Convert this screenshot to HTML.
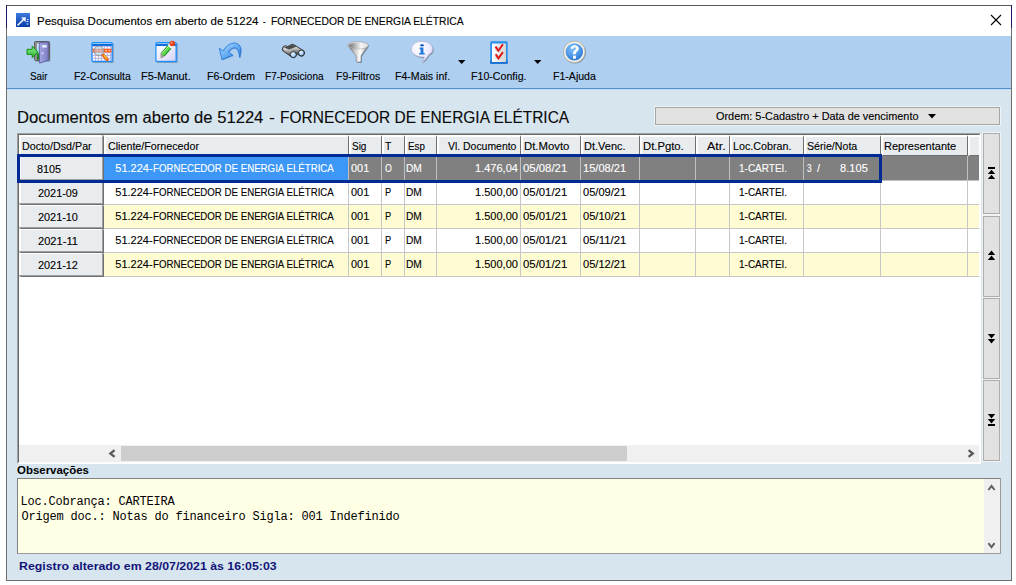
<!DOCTYPE html>
<html><head><meta charset="utf-8">
<style>
*{box-sizing:border-box;margin:0;padding:0}
html,body{width:1016px;height:585px;overflow:hidden;background:#fff;font-family:"Liberation Sans",sans-serif;color:#000}
.a{position:absolute}
.t{position:absolute;white-space:pre;line-height:1;-webkit-text-stroke:0.12px currentColor}
</style></head><body>
<div class="a" style="left:6px;top:5px;width:1006px;height:576px;border:1px solid #6e6e6e;border-top-color:#585858;background:#d6e5ee"></div>
<div class="a" style="left:6px;top:5px;width:1px;height:23px;background:#1e1a6a"></div>
<div class="a" style="left:1011px;top:5px;width:1px;height:23px;background:#1e1a6a"></div>
<div class="a" style="left:7px;top:6px;width:1004px;height:30px;background:#fff"></div>
<svg class="a" style="left:16px;top:13px" width="14" height="14" viewBox="0 0 14 14">
<defs><linearGradient id="ig" x1="0" y1="0" x2="0" y2="1"><stop offset="0" stop-color="#3d7be0"/><stop offset="1" stop-color="#0b3aa6"/></linearGradient></defs>
<rect width="14" height="14" fill="url(#ig)"/>
<path d="M1.5 12.5 L8 6" stroke="#fff" stroke-width="1.5"/><path d="M5 4.5 L9.8 4.2 L9.5 9 Z" fill="#fff"/>
<path d="M10.5 8.5 h2 M10.5 11 h2 M11 6.5 h1.5" stroke="#cfe0ff" stroke-width="1"/>
</svg>
<svg class="a" style="left:990px;top:14px" width="12" height="12"><path d="M1 1 L11 11 M11 1 L1 11" stroke="#000" stroke-width="1.1"/></svg>
<div class="a" style="left:7px;top:36px;width:1004px;height:52px;background:#aecff0"></div>
<div class="a" style="left:7px;top:88px;width:1004px;height:1px;background:#4f8fcf"></div>
<div class="a" style="left:7px;top:89px;width:1004px;height:1px;background:#c6def2"></div>
<svg class="a" style="left:458px;top:60px" width="8" height="5"><path d="M0 0 H7.4 L3.7 4 Z" fill="#000"/></svg>
<svg class="a" style="left:534px;top:60px" width="8" height="5"><path d="M0 0 H7.4 L3.7 4 Z" fill="#000"/></svg>
<svg class="a" style="left:22px;top:38px" width="32" height="28" viewBox="0 0 32 28">
<defs>
<linearGradient id="dg" x1="0" y1="0" x2="1" y2="0"><stop offset="0" stop-color="#a6a8e4"/><stop offset="1" stop-color="#7a7cc0"/></linearGradient>
<linearGradient id="og" x1="0" y1="0" x2="0" y2="1"><stop offset="0" stop-color="#d8f0ff"/><stop offset="0.55" stop-color="#9fd4f0"/><stop offset="0.62" stop-color="#2a9a2a"/><stop offset="1" stop-color="#1a7a1a"/></linearGradient>
<linearGradient id="ag" x1="0" y1="0" x2="0" y2="1"><stop offset="0" stop-color="#8ef08e"/><stop offset="1" stop-color="#2cb42c"/></linearGradient>
</defs>
<rect x="13.5" y="4.5" width="15" height="19.5" rx="1" fill="#5a6a80" opacity="0.35"/>
<rect x="12.5" y="3.5" width="15" height="19" rx="1" fill="#8e8e8e" stroke="#5e5e5e" stroke-width="1"/>
<rect x="15" y="5.5" width="4" height="16" fill="url(#og)"/>
<path d="M17.2 4.8 L26.6 3.8 L26.2 22.4 L17.6 25.2 Z" fill="url(#dg)" stroke="#55589a" stroke-width="0.8"/>
<rect x="20.2" y="7" width="4.6" height="2.6" fill="#e8eaff"/>
<circle cx="20.6" cy="15.3" r="1" fill="#d8dcff"/>
<path d="M5 11.3 H10.2 V8 L15.8 13.9 L10.2 19.8 V16.4 H5 Z" fill="url(#ag)" stroke="#159015" stroke-width="1"/>
</svg>
<svg class="a" style="left:86px;top:38px" width="32" height="28" viewBox="0 0 32 28">
<defs>
<pattern id="gp" width="3" height="3" patternUnits="userSpaceOnUse" x="6" y="8"><rect width="3" height="3" fill="#b4b0e4"/><rect x="0.8" y="0.8" width="2" height="2" fill="#fff"/></pattern>
</defs>
<rect x="6.3" y="5" width="21.5" height="20" rx="1.5" fill="#40607a" opacity="0.45"/>
<rect x="5.3" y="4" width="21.5" height="20" rx="1.5" fill="#1a90ff"/>
<rect x="6.5" y="5" width="19" height="2.6" fill="#0b66d8"/>
<rect x="6.5" y="5" width="19" height="0.9" fill="#a8d4ff"/>
<rect x="6.5" y="8" width="19" height="14.8" fill="url(#gp)"/>
<rect x="6.5" y="10.8" width="19" height="3.6" fill="#ff5a1a"/>
<path d="M7.5 12 h1.6 v1.3 h-1.6z M10.5 12 h1.6 v1.3 h-1.6z M13.5 12 h1.6 v1.3 h-1.6z M16.5 12 h1.6 v1.3 h-1.6z M19.5 12 h1.6 v1.3 h-1.6z M22.5 12 h1.6 v1.3 h-1.6z" fill="#ffc8a0"/>
<circle cx="12.9" cy="12.9" r="4.8" fill="#b0e0ff" fill-opacity="0.5" stroke="#9a9a9a" stroke-width="1"/>
<path d="M17.2 17.3 L21.3 21.6" stroke="#e85a10" stroke-width="3" stroke-linecap="round"/>
<path d="M17.6 17.2 L21.2 21" stroke="#ffd020" stroke-width="1.2"/>
</svg>
<svg class="a" style="left:150px;top:38px" width="32" height="28" viewBox="0 0 32 28">
<defs><linearGradient id="wg" x1="0" y1="0" x2="1" y2="1"><stop offset="0" stop-color="#fff"/><stop offset="1" stop-color="#d6d2f6"/></linearGradient>
<linearGradient id="pg" x1="0" y1="0" x2="1" y2="0"><stop offset="0" stop-color="#9cf07a"/><stop offset="1" stop-color="#1e9a1e"/></linearGradient></defs>
<rect x="6.3" y="5" width="21.5" height="20" rx="1.5" fill="#40607a" opacity="0.45"/>
<rect x="5.3" y="4" width="21.5" height="20" rx="1.5" fill="#1a90ff"/>
<rect x="6.5" y="5.2" width="19" height="2.6" fill="#0b66d8"/>
<rect x="6.5" y="5.2" width="19" height="0.9" fill="#a8d4ff"/>
<rect x="6.5" y="8" width="19" height="14.8" fill="url(#wg)"/>
<path d="M10.8 15.6 L13.9 18.5 L11 20.2 Z" fill="#b8a890" stroke="#7a7a7a" stroke-width="0.5"/>
<path d="M12.6 16.8 L19.6 8.8" stroke="#1e8a1e" stroke-width="5" stroke-linecap="butt"/>
<path d="M12.6 16.8 L19.6 8.8" stroke="#5cd84a" stroke-width="3.2"/>
<path d="M11.8 15.8 L18.8 8" stroke="#b0f890" stroke-width="1"/>
<path d="M19.4 9 L21 7.2" stroke="#f4f4f4" stroke-width="5"/>
<circle cx="22.3" cy="5.5" r="2.8" fill="#e8401a"/>
<circle cx="21.6" cy="4.8" r="1" fill="#ff9a70"/>
</svg>
<svg class="a" style="left:214px;top:38px" width="32" height="28" viewBox="0 0 32 28">
<defs><linearGradient id="rg" x1="0" y1="0" x2="1" y2="1"><stop offset="0" stop-color="#b4dcff"/><stop offset="0.6" stop-color="#5aa6f0"/><stop offset="1" stop-color="#2a7ee0"/></linearGradient></defs>
<path d="M5.3 10.3 L9.5 13 C11 9, 15 5.5, 20 5 C24 4.8, 27.5 8, 26.8 13 C26.5 16, 26 18, 25.8 19.6 C25.3 16, 24.5 12, 22.5 10.5 C20.5 9, 17 10, 14.5 14 L18.9 17.2 L7.9 21.5 Z" fill="#1a4a90" opacity="0.35" transform="translate(0.7,0.9)"/>
<path d="M5.3 10.3 L9.5 13 C11 9, 15 5.5, 20 5 C24 4.8, 27.5 8, 26.8 13 C26.5 16, 26 18, 25.8 19.6 C25.3 16, 24.5 12, 22.5 10.5 C20.5 9, 17 10, 14.5 14 L18.9 17.2 L7.9 21.5 Z" fill="url(#rg)" stroke="#1a6ed8" stroke-width="0.8" stroke-linejoin="round"/>
</svg>
<svg class="a" style="left:278px;top:38px" width="32" height="28" viewBox="0 0 32 28">
<defs><linearGradient id="bg2" x1="0" y1="0" x2="0" y2="1"><stop offset="0" stop-color="#d8d8d8"/><stop offset="1" stop-color="#6a6a6a"/></linearGradient>
<radialGradient id="lg" cx="0.4" cy="0.35" r="0.7"><stop offset="0" stop-color="#eef8ff"/><stop offset="1" stop-color="#78b0ee"/></radialGradient></defs>
<path d="M7.5 11 L15.3 16.5" stroke="#3a3a3a" stroke-width="7" stroke-linecap="round"/>
<path d="M14.5 9.5 L23.4 15" stroke="#3a3a3a" stroke-width="7" stroke-linecap="round"/>
<path d="M7.8 11 L15 16" stroke="url(#bg2)" stroke-width="5.2" stroke-linecap="round"/>
<path d="M14.8 9.6 L23 14.6" stroke="url(#bg2)" stroke-width="5.2" stroke-linecap="round"/>
<path d="M6 9.5 L12 7 L17 7.3 L19 8.6 L11 11.5 Z" fill="#4a4a4a"/>
<circle cx="15.3" cy="16.6" r="3" fill="url(#lg)" stroke="#2a2a2a" stroke-width="0.9"/>
<circle cx="23.4" cy="15" r="2.9" fill="url(#lg)" stroke="#2a2a2a" stroke-width="0.9"/>
</svg>
<svg class="a" style="left:342px;top:38px" width="32" height="28" viewBox="0 0 32 28">
<defs><linearGradient id="fg" x1="0" y1="0" x2="1" y2="0"><stop offset="0" stop-color="#7c7c7c"/><stop offset="0.6" stop-color="#ffffff"/><stop offset="1" stop-color="#9c9c9c"/></linearGradient>
<linearGradient id="fg2" x1="0" y1="0" x2="1" y2="0"><stop offset="0" stop-color="#6e6e6e"/><stop offset="0.65" stop-color="#f4f4f4"/><stop offset="1" stop-color="#dcdcdc"/></linearGradient></defs>
<path d="M5.6 7.3 L14.2 18 V23.5 Q16.5 24.8 19 23.5 V17.8 L26.4 7.3 Z" fill="#3a4048" opacity="0.45" transform="translate(0.9,0.9)"/>
<path d="M5.6 7.3 L14.2 18 V23.5 Q16.5 24.8 19 23.5 V17.8 L26.4 7.3 Z" fill="url(#fg)" stroke="#6a6a6a" stroke-width="0.5"/>
<ellipse cx="16" cy="7.3" rx="10.4" ry="3.6" fill="#e6e6e6" stroke="#8a8a8a" stroke-width="0.5"/>
<ellipse cx="16" cy="7.6" rx="9.4" ry="2.9" fill="url(#fg2)"/>
</svg>
<svg class="a" style="left:406px;top:38px" width="32" height="28" viewBox="0 0 32 28">
<defs><radialGradient id="sg" cx="0.35" cy="0.3" r="0.85"><stop offset="0" stop-color="#ffffff"/><stop offset="0.6" stop-color="#eceaff"/><stop offset="1" stop-color="#bcb8e8"/></radialGradient></defs>
<path d="M16 3.3 C22.2 3.3 26.8 6.6 26.8 11.2 C26.8 13.6 25.2 15.4 22.8 16.6 C21.5 19.5 19 22.5 15.8 24.4 C17.2 22.4 18 20.8 18.2 19 C10.5 19.2 5.3 15.8 5.3 11.2 C5.3 6.6 9.8 3.3 16 3.3 Z" fill="#555" opacity="0.5" transform="translate(0.9,1)"/>
<path d="M16 3.3 C22.2 3.3 26.8 6.6 26.8 11.2 C26.8 13.6 25.2 15.4 22.8 16.6 C21.5 19.5 19 22.5 15.8 24.4 C17.2 22.4 18 20.8 18.2 19 C10.5 19.2 5.3 15.8 5.3 11.2 C5.3 6.6 9.8 3.3 16 3.3 Z" fill="url(#sg)" stroke="#a8a6c8" stroke-width="0.6"/>
<ellipse cx="16" cy="7.3" rx="2" ry="1.1" fill="#0a50b8"/>
<path d="M13.6 9.6 H17.4 V14.9 H18.7 V16.6 H13.2 V14.9 H14.6 V11.2 H13.6 Z" fill="#1a78e0"/>
</svg>
<svg class="a" style="left:484px;top:38px" width="32" height="28" viewBox="0 0 32 28">
<defs><linearGradient id="cg" x1="0" y1="0" x2="1" y2="0"><stop offset="0" stop-color="#ffffff"/><stop offset="1" stop-color="#d4d4d4"/></linearGradient></defs>
<rect x="6.2" y="3.2" width="17.5" height="22.6" rx="1.5" fill="#2a90e8"/>
<rect x="6.2" y="22.5" width="17.5" height="3.3" fill="#1a70d0"/>
<rect x="8" y="5.5" width="14" height="18.5" fill="url(#cg)"/>
<ellipse cx="14.4" cy="11.4" rx="2.8" ry="2" fill="none" stroke="#c8c8c8" stroke-width="0.8"/>
<ellipse cx="14.4" cy="19.2" rx="2.8" ry="2" fill="none" stroke="#c8c8c8" stroke-width="0.8"/>
<path d="M11.5 8.6 L14.4 12.7 L18.9 6.2" stroke="#e01010" stroke-width="1.9" fill="none"/>
<path d="M11.7 16.3 L14.4 20.3 L18.9 14.1" stroke="#e01010" stroke-width="1.9" fill="none"/>
</svg>
<svg class="a" style="left:558px;top:38px" width="32" height="28" viewBox="0 0 32 28">
<defs><radialGradient id="qg" cx="0.4" cy="0.3" r="0.75"><stop offset="0" stop-color="#80c4ff"/><stop offset="1" stop-color="#2a78d6"/></radialGradient></defs>
<circle cx="17" cy="14.6" r="10.9" fill="#404850" opacity="0.45"/>
<circle cx="16.3" cy="13.9" r="10.8" fill="#f4f1e6" stroke="#a8a294" stroke-width="0.7"/>
<circle cx="16.3" cy="13.9" r="8.7" fill="url(#qg)"/>
<g transform="translate(16.8 14) scale(1.22) translate(-16.5 -13.8)" fill="#fff">
<path d="M13.2 11.2 C13.2 8.8 15 8.2 16.4 8.2 C18.2 8.2 19.8 9.2 19.8 11 C19.8 13.2 17.3 13.4 17.3 15.6 H15 C15 12.4 17.4 12.4 17.4 11 C17.4 10.2 16.8 9.9 16.3 9.9 C15.6 9.9 15.4 10.5 15.4 11.2 Z"/>
<rect x="15" y="16.8" width="2.4" height="2.5"/>
</g>
</svg>

<div class="a" style="left:654px;top:106px;width:347px;height:20px;background:#eef3f6"></div>
<div class="a" style="left:655px;top:107px;width:345px;height:18px;background:#e1e1e1;border:1px solid #a7a7a7"></div>
<svg class="a" style="left:927.5px;top:113.8px" width="8" height="5"><path d="M0 0 H8 L4 4.4 Z" fill="#000"/></svg>
<div class="a" style="left:17px;top:133px;width:964px;height:331px;background:#fff;border-left:1px solid #a0a0a0;border-top:1px solid #a0a0a0;border-right:1px solid #fff;border-bottom:1px solid #fff"></div>
<div class="a" style="left:18px;top:134px;width:962px;height:329px;border-left:1px solid #696969;border-top:1px solid #696969;border-right:1px solid #fcfcfc;border-bottom:1px solid #fcfcfc"></div>
<div class="a" style="left:19px;top:135px;width:85px;height:21px;background:#e9ecef;border-left:2px solid #fff;border-top:2px solid #fff;border-right:1px solid #6f6f6f;border-bottom:1px solid #6f6f6f"></div>
<div class="a" style="left:104px;top:135px;width:245px;height:21px;background:#e9ecef;border-left:2px solid #fff;border-top:2px solid #fff;border-right:1px solid #6f6f6f;border-bottom:1px solid #6f6f6f"></div>
<div class="a" style="left:349px;top:135px;width:33px;height:21px;background:#e9ecef;border-left:2px solid #fff;border-top:2px solid #fff;border-right:1px solid #6f6f6f;border-bottom:1px solid #6f6f6f"></div>
<div class="a" style="left:382px;top:135px;width:23px;height:21px;background:#e9ecef;border-left:2px solid #fff;border-top:2px solid #fff;border-right:1px solid #6f6f6f;border-bottom:1px solid #6f6f6f"></div>
<div class="a" style="left:405px;top:135px;width:32px;height:21px;background:#e9ecef;border-left:2px solid #fff;border-top:2px solid #fff;border-right:1px solid #6f6f6f;border-bottom:1px solid #6f6f6f"></div>
<div class="a" style="left:437px;top:135px;width:84px;height:21px;background:#e9ecef;border-left:2px solid #fff;border-top:2px solid #fff;border-right:1px solid #6f6f6f;border-bottom:1px solid #6f6f6f"></div>
<div class="a" style="left:521px;top:135px;width:60px;height:21px;background:#e9ecef;border-left:2px solid #fff;border-top:2px solid #fff;border-right:1px solid #6f6f6f;border-bottom:1px solid #6f6f6f"></div>
<div class="a" style="left:581px;top:135px;width:59px;height:21px;background:#e9ecef;border-left:2px solid #fff;border-top:2px solid #fff;border-right:1px solid #6f6f6f;border-bottom:1px solid #6f6f6f"></div>
<div class="a" style="left:640px;top:135px;width:56px;height:21px;background:#e9ecef;border-left:2px solid #fff;border-top:2px solid #fff;border-right:1px solid #6f6f6f;border-bottom:1px solid #6f6f6f"></div>
<div class="a" style="left:696px;top:135px;width:34px;height:21px;background:#e9ecef;border-left:2px solid #fff;border-top:2px solid #fff;border-right:1px solid #6f6f6f;border-bottom:1px solid #6f6f6f"></div>
<div class="a" style="left:730px;top:135px;width:74px;height:21px;background:#e9ecef;border-left:2px solid #fff;border-top:2px solid #fff;border-right:1px solid #6f6f6f;border-bottom:1px solid #6f6f6f"></div>
<div class="a" style="left:804px;top:135px;width:77px;height:21px;background:#e9ecef;border-left:2px solid #fff;border-top:2px solid #fff;border-right:1px solid #6f6f6f;border-bottom:1px solid #6f6f6f"></div>
<div class="a" style="left:881px;top:135px;width:87px;height:21px;background:#e9ecef;border-left:2px solid #fff;border-top:2px solid #fff;border-right:1px solid #6f6f6f;border-bottom:1px solid #6f6f6f"></div>
<div class="a" style="left:968px;top:135px;width:11px;height:21px;background:#e9ecef;border-left:2px solid #fff;border-top:2px solid #fff;border-bottom:1px solid #6f6f6f"></div>
<div class="a" style="left:102px;top:135px;width:1px;height:20px;background:#a0a0a0"></div>
<div class="a" style="left:19px;top:156px;width:85px;height:25px;background:#e9ecef;border-left:2px solid #fff;border-top:1px solid #fff;border-right:1px solid #6f6f6f;border-bottom:1px solid #6f6f6f"></div>
<div class="a" style="left:102px;top:156px;width:1px;height:24px;background:#a0a0a0"></div>
<div class="a" style="left:19px;top:179px;width:84px;height:1px;background:#a0a0a0"></div>
<div class="a" style="left:104px;top:156px;width:875px;height:25px;background:#808080;border-bottom:1px solid #c0c0c0"></div>
<div class="a" style="left:348px;top:156px;width:1px;height:25px;background:#c0c0c0"></div>
<div class="a" style="left:381px;top:156px;width:1px;height:25px;background:#c0c0c0"></div>
<div class="a" style="left:404px;top:156px;width:1px;height:25px;background:#c0c0c0"></div>
<div class="a" style="left:436px;top:156px;width:1px;height:25px;background:#c0c0c0"></div>
<div class="a" style="left:520px;top:156px;width:1px;height:25px;background:#c0c0c0"></div>
<div class="a" style="left:580px;top:156px;width:1px;height:25px;background:#c0c0c0"></div>
<div class="a" style="left:639px;top:156px;width:1px;height:25px;background:#c0c0c0"></div>
<div class="a" style="left:695px;top:156px;width:1px;height:25px;background:#c0c0c0"></div>
<div class="a" style="left:729px;top:156px;width:1px;height:25px;background:#c0c0c0"></div>
<div class="a" style="left:803px;top:156px;width:1px;height:25px;background:#c0c0c0"></div>
<div class="a" style="left:880px;top:156px;width:1px;height:25px;background:#c0c0c0"></div>
<div class="a" style="left:967px;top:156px;width:1px;height:25px;background:#c0c0c0"></div>
<div class="a" style="left:104px;top:156px;width:244px;height:24px;background:#3d97f6"></div>
<div class="a" style="left:19px;top:181px;width:85px;height:24px;background:#e9ecef;border-left:2px solid #fff;border-top:1px solid #fff;border-right:1px solid #6f6f6f;border-bottom:1px solid #6f6f6f"></div>
<div class="a" style="left:102px;top:181px;width:1px;height:23px;background:#a0a0a0"></div>
<div class="a" style="left:19px;top:203px;width:84px;height:1px;background:#a0a0a0"></div>
<div class="a" style="left:104px;top:181px;width:875px;height:24px;background:#ffffff;border-bottom:1px solid #c6c6c6"></div>
<div class="a" style="left:348px;top:181px;width:1px;height:24px;background:#c6c6c6"></div>
<div class="a" style="left:381px;top:181px;width:1px;height:24px;background:#c6c6c6"></div>
<div class="a" style="left:404px;top:181px;width:1px;height:24px;background:#c6c6c6"></div>
<div class="a" style="left:436px;top:181px;width:1px;height:24px;background:#c6c6c6"></div>
<div class="a" style="left:520px;top:181px;width:1px;height:24px;background:#c6c6c6"></div>
<div class="a" style="left:580px;top:181px;width:1px;height:24px;background:#c6c6c6"></div>
<div class="a" style="left:639px;top:181px;width:1px;height:24px;background:#c6c6c6"></div>
<div class="a" style="left:695px;top:181px;width:1px;height:24px;background:#c6c6c6"></div>
<div class="a" style="left:729px;top:181px;width:1px;height:24px;background:#c6c6c6"></div>
<div class="a" style="left:803px;top:181px;width:1px;height:24px;background:#c6c6c6"></div>
<div class="a" style="left:880px;top:181px;width:1px;height:24px;background:#c6c6c6"></div>
<div class="a" style="left:967px;top:181px;width:1px;height:24px;background:#c6c6c6"></div>
<div class="a" style="left:19px;top:205px;width:85px;height:24px;background:#e9ecef;border-left:2px solid #fff;border-top:1px solid #fff;border-right:1px solid #6f6f6f;border-bottom:1px solid #6f6f6f"></div>
<div class="a" style="left:102px;top:205px;width:1px;height:23px;background:#a0a0a0"></div>
<div class="a" style="left:19px;top:227px;width:84px;height:1px;background:#a0a0a0"></div>
<div class="a" style="left:104px;top:205px;width:875px;height:24px;background:#fffcd4;border-bottom:1px solid #c6c6c6"></div>
<div class="a" style="left:348px;top:205px;width:1px;height:24px;background:#c6c6c6"></div>
<div class="a" style="left:381px;top:205px;width:1px;height:24px;background:#c6c6c6"></div>
<div class="a" style="left:404px;top:205px;width:1px;height:24px;background:#c6c6c6"></div>
<div class="a" style="left:436px;top:205px;width:1px;height:24px;background:#c6c6c6"></div>
<div class="a" style="left:520px;top:205px;width:1px;height:24px;background:#c6c6c6"></div>
<div class="a" style="left:580px;top:205px;width:1px;height:24px;background:#c6c6c6"></div>
<div class="a" style="left:639px;top:205px;width:1px;height:24px;background:#c6c6c6"></div>
<div class="a" style="left:695px;top:205px;width:1px;height:24px;background:#c6c6c6"></div>
<div class="a" style="left:729px;top:205px;width:1px;height:24px;background:#c6c6c6"></div>
<div class="a" style="left:803px;top:205px;width:1px;height:24px;background:#c6c6c6"></div>
<div class="a" style="left:880px;top:205px;width:1px;height:24px;background:#c6c6c6"></div>
<div class="a" style="left:967px;top:205px;width:1px;height:24px;background:#c6c6c6"></div>
<div class="a" style="left:19px;top:229px;width:85px;height:24px;background:#e9ecef;border-left:2px solid #fff;border-top:1px solid #fff;border-right:1px solid #6f6f6f;border-bottom:1px solid #6f6f6f"></div>
<div class="a" style="left:102px;top:229px;width:1px;height:23px;background:#a0a0a0"></div>
<div class="a" style="left:19px;top:251px;width:84px;height:1px;background:#a0a0a0"></div>
<div class="a" style="left:104px;top:229px;width:875px;height:24px;background:#ffffff;border-bottom:1px solid #c6c6c6"></div>
<div class="a" style="left:348px;top:229px;width:1px;height:24px;background:#c6c6c6"></div>
<div class="a" style="left:381px;top:229px;width:1px;height:24px;background:#c6c6c6"></div>
<div class="a" style="left:404px;top:229px;width:1px;height:24px;background:#c6c6c6"></div>
<div class="a" style="left:436px;top:229px;width:1px;height:24px;background:#c6c6c6"></div>
<div class="a" style="left:520px;top:229px;width:1px;height:24px;background:#c6c6c6"></div>
<div class="a" style="left:580px;top:229px;width:1px;height:24px;background:#c6c6c6"></div>
<div class="a" style="left:639px;top:229px;width:1px;height:24px;background:#c6c6c6"></div>
<div class="a" style="left:695px;top:229px;width:1px;height:24px;background:#c6c6c6"></div>
<div class="a" style="left:729px;top:229px;width:1px;height:24px;background:#c6c6c6"></div>
<div class="a" style="left:803px;top:229px;width:1px;height:24px;background:#c6c6c6"></div>
<div class="a" style="left:880px;top:229px;width:1px;height:24px;background:#c6c6c6"></div>
<div class="a" style="left:967px;top:229px;width:1px;height:24px;background:#c6c6c6"></div>
<div class="a" style="left:19px;top:253px;width:85px;height:24px;background:#e9ecef;border-left:2px solid #fff;border-top:1px solid #fff;border-right:1px solid #6f6f6f;border-bottom:1px solid #6f6f6f"></div>
<div class="a" style="left:102px;top:253px;width:1px;height:23px;background:#a0a0a0"></div>
<div class="a" style="left:19px;top:275px;width:84px;height:1px;background:#a0a0a0"></div>
<div class="a" style="left:104px;top:253px;width:875px;height:24px;background:#fffcd4;border-bottom:1px solid #c6c6c6"></div>
<div class="a" style="left:348px;top:253px;width:1px;height:24px;background:#c6c6c6"></div>
<div class="a" style="left:381px;top:253px;width:1px;height:24px;background:#c6c6c6"></div>
<div class="a" style="left:404px;top:253px;width:1px;height:24px;background:#c6c6c6"></div>
<div class="a" style="left:436px;top:253px;width:1px;height:24px;background:#c6c6c6"></div>
<div class="a" style="left:520px;top:253px;width:1px;height:24px;background:#c6c6c6"></div>
<div class="a" style="left:580px;top:253px;width:1px;height:24px;background:#c6c6c6"></div>
<div class="a" style="left:639px;top:253px;width:1px;height:24px;background:#c6c6c6"></div>
<div class="a" style="left:695px;top:253px;width:1px;height:24px;background:#c6c6c6"></div>
<div class="a" style="left:729px;top:253px;width:1px;height:24px;background:#c6c6c6"></div>
<div class="a" style="left:803px;top:253px;width:1px;height:24px;background:#c6c6c6"></div>
<div class="a" style="left:880px;top:253px;width:1px;height:24px;background:#c6c6c6"></div>
<div class="a" style="left:967px;top:253px;width:1px;height:24px;background:#c6c6c6"></div>
<div class="a" style="left:17px;top:154px;width:865px;height:29px;border:3px solid #002b95"></div>
<div class="a" style="left:19px;top:445px;width:960px;height:17px;background:#f0f0f0"></div>
<div class="a" style="left:121px;top:446px;width:506px;height:15px;background:#cdcdcd"></div>
<svg class="a" style="left:108px;top:449px" width="9" height="9"><path d="M6.6 1.2 L2.4 4.5 L6.6 7.8" stroke="#5a5a5a" stroke-width="2.3" fill="none"/></svg>
<svg class="a" style="left:967px;top:449px" width="9" height="9"><path d="M1.6 1.2 L5.8 4.5 L1.6 7.8" stroke="#5a5a5a" stroke-width="2.3" fill="none"/></svg>
<div class="a" style="left:982px;top:132px;width:19px;height:83px;background:#f2f2f2"></div>
<div class="a" style="left:983px;top:133px;width:17px;height:81px;background:#e1e1e1;border:1px solid #adadad"></div>
<div class="a" style="left:982px;top:215px;width:19px;height:83px;background:#f2f2f2"></div>
<div class="a" style="left:983px;top:216px;width:17px;height:81px;background:#e1e1e1;border:1px solid #adadad"></div>
<div class="a" style="left:982px;top:297px;width:19px;height:83px;background:#f2f2f2"></div>
<div class="a" style="left:983px;top:298px;width:17px;height:81px;background:#e1e1e1;border:1px solid #adadad"></div>
<div class="a" style="left:982px;top:379px;width:19px;height:83px;background:#f2f2f2"></div>
<div class="a" style="left:983px;top:380px;width:17px;height:81px;background:#e1e1e1;border:1px solid #adadad"></div>
<svg class="a" style="left:0;top:0" width="1016" height="585"><path d="M988 167h7v2h-7z M987.8 174h7.4l-3.7-4.2z M987.8 179h7.4l-3.7-4.2z" fill="#000"/><path d="M987.8 255h7.4l-3.7-4.4z M987.8 260h7.4l-3.7-4.4z" fill="#000"/><path d="M987.8 334h7.4l-3.7 4.4z M987.8 339h7.4l-3.7 4.4z" fill="#000"/><path d="M987.8 414h7.4l-3.7 4.4z M987.8 419h7.4l-3.7 4.4z M988 424h7v2h-7z" fill="#000"/></svg>
<div class="a" style="left:17px;top:478px;width:984px;height:76px;background:#ffffe6;border:1px solid #828282;border-right-color:#9a9a9a;border-bottom-color:#9a9a9a"></div>
<div class="a" style="left:984px;top:479px;width:16px;height:74px;background:#f0f0f0"></div>
<svg class="a" style="left:987px;top:484px" width="10" height="8"><path d="M1.4 6 L4.5 2 L7.6 6" stroke="#606060" stroke-width="2" fill="none"/></svg>
<svg class="a" style="left:987px;top:542px" width="10" height="7"><path d="M1.4 1.2 L4.5 5.2 L7.6 1.2" stroke="#606060" stroke-width="2" fill="none"/></svg>
<div class="t" style="left:36.60px;top:15.07px;font:normal 11.5px 'Liberation Sans';color:#000;transform:scaleX(1.0014);transform-origin:0 0;">Pesquisa Documentos em aberto de 51224</div>
<div class="t" style="left:263.00px;top:15.07px;font:normal 11.5px 'Liberation Sans';color:#000;transform:scaleX(0.6750);transform-origin:0 0;">-</div>
<div class="t" style="left:270.90px;top:15.07px;font:normal 11.5px 'Liberation Sans';color:#000;transform:scaleX(0.8972);transform-origin:0 0;">FORNECEDOR DE ENERGIA ELÉTRICA</div>
<div class="t" style="left:29.60px;top:70.09px;font:normal 11px 'Liberation Sans';color:#000;transform:scaleX(0.8945);transform-origin:0 0;">Sair</div>
<div class="t" style="left:73.60px;top:70.09px;font:normal 11px 'Liberation Sans';color:#000;transform:scaleX(0.9474);transform-origin:0 0;">F2-Consulta</div>
<div class="t" style="left:140.90px;top:70.09px;font:normal 11px 'Liberation Sans';color:#000;transform:scaleX(0.9906);transform-origin:0 0;">F5-Manut.</div>
<div class="t" style="left:206.60px;top:70.09px;font:normal 11px 'Liberation Sans';color:#000;transform:scaleX(0.9589);transform-origin:0 0;">F6-Ordem</div>
<div class="t" style="left:264.60px;top:70.09px;font:normal 11px 'Liberation Sans';color:#000;transform:scaleX(0.9128);transform-origin:0 0;">F7-Posiciona</div>
<div class="t" style="left:336.20px;top:70.09px;font:normal 11px 'Liberation Sans';color:#000;transform:scaleX(0.9543);transform-origin:0 0;">F9-Filtros</div>
<div class="t" style="left:394.60px;top:70.09px;font:normal 11px 'Liberation Sans';color:#000;transform:scaleX(0.9600);transform-origin:0 0;">F4-Mais inf.</div>
<div class="t" style="left:471.00px;top:70.09px;font:normal 11px 'Liberation Sans';color:#000;transform:scaleX(0.9667);transform-origin:0 0;">F10-Config.</div>
<div class="t" style="left:552.50px;top:70.09px;font:normal 11px 'Liberation Sans';color:#000;transform:scaleX(0.9601);transform-origin:0 0;">F1-Ajuda</div>
<div class="t" style="left:17.26px;top:109.46px;font:normal 16px 'Liberation Sans';color:#0a0a0a;transform:scaleX(1.0373);transform-origin:0 0;">Documentos em aberto de 51224</div>
<div class="t" style="left:269.20px;top:109.46px;font:normal 16px 'Liberation Sans';color:#0a0a0a;transform:scaleX(1.1000);transform-origin:0 0;">-</div>
<div class="t" style="left:280.03px;top:109.46px;font:normal 16px 'Liberation Sans';color:#0a0a0a;transform:scaleX(0.9681);transform-origin:0 0;">FORNECEDOR DE ENERGIA ELÉTRICA</div>
<div class="t" style="left:715.90px;top:110.19px;font:normal 11px 'Liberation Sans';color:#000;transform:scaleX(0.9902);transform-origin:0 0;">Ordem: 5-Cadastro + Data de vencimento</div>
<div class="t" style="left:22.00px;top:140.29px;font:normal 11px 'Liberation Sans';color:#000;transform:scaleX(0.9741);transform-origin:0 0;">Docto/Dsd/Par</div>
<div class="t" style="left:107.70px;top:140.29px;font:normal 11px 'Liberation Sans';color:#000;transform:scaleX(0.9725);transform-origin:0 0;">Cliente/Fornecedor</div>
<div class="t" style="left:352.00px;top:140.29px;font:normal 11px 'Liberation Sans';color:#000;transform:scaleX(0.9062);transform-origin:0 0;">Sig</div>
<div class="t" style="left:385.20px;top:140.29px;font:normal 11px 'Liberation Sans';color:#000;transform:scaleX(0.9429);transform-origin:0 0;">T</div>
<div class="t" style="left:408.20px;top:140.29px;font:normal 11px 'Liberation Sans';color:#000;transform:scaleX(0.8866);transform-origin:0 0;">Esp</div>
<div class="t" style="left:447.60px;top:140.29px;font:normal 11px 'Liberation Sans';color:#000;transform:scaleX(0.9483);transform-origin:0 0;">Vl. Documento</div>
<div class="t" style="left:524.10px;top:140.29px;font:normal 11px 'Liberation Sans';color:#000;transform:scaleX(1.0321);transform-origin:0 0;">Dt.Movto</div>
<div class="t" style="left:584.00px;top:140.29px;font:normal 11px 'Liberation Sans';color:#000;transform:scaleX(0.9995);transform-origin:0 0;">Dt.Venc.</div>
<div class="t" style="left:643.00px;top:140.29px;font:normal 11px 'Liberation Sans';color:#000;transform:scaleX(1.0256);transform-origin:0 0;">Dt.Pgto.</div>
<div class="t" style="left:706.60px;top:140.29px;font:normal 11px 'Liberation Sans';color:#000;transform:scaleX(1.1247);transform-origin:0 0;">Atr.</div>
<div class="t" style="left:733.30px;top:140.29px;font:normal 11px 'Liberation Sans';color:#000;transform:scaleX(0.9755);transform-origin:0 0;">Loc.Cobran.</div>
<div class="t" style="left:807.30px;top:140.29px;font:normal 11px 'Liberation Sans';color:#000;transform:scaleX(0.9668);transform-origin:0 0;">Série/Nota</div>
<div class="t" style="left:884.30px;top:140.29px;font:normal 11px 'Liberation Sans';color:#000;transform:scaleX(1.0008);transform-origin:0 0;">Representante</div>
<div class="t" style="left:37.40px;top:163.29px;font:normal 11px 'Liberation Sans';color:#000;transform:scaleX(0.9855);transform-origin:0 0;">8105</div>
<div class="t" style="left:115.30px;top:162.29px;font:normal 11px 'Liberation Sans';color:#fff;">51.224-</div>
<div class="t" style="left:152.90px;top:162.29px;font:normal 11px 'Liberation Sans';color:#fff;transform:scaleX(0.8803);transform-origin:0 0;">FORNECEDOR DE ENERGIA ELÉTRICA</div>
<div class="t" style="left:350.60px;top:162.29px;font:normal 11px 'Liberation Sans';color:#fff;transform:scaleX(0.9981);transform-origin:0 0;">001</div>
<div class="t" style="left:384.60px;top:162.29px;font:normal 11px 'Liberation Sans';color:#fff;transform:scaleX(0.8000);transform-origin:0 0;">O</div>
<div class="t" style="left:405.70px;top:162.29px;font:normal 11px 'Liberation Sans';color:#fff;transform:scaleX(0.9266);transform-origin:0 0;">DM</div>
<div class="t" style="left:475.00px;top:162.29px;font:normal 11px 'Liberation Sans';color:#fff;transform:scaleX(1.0023);transform-origin:0 0;">1.476,04</div>
<div class="t" style="left:522.50px;top:162.29px;font:normal 11px 'Liberation Sans';color:#fff;transform:scaleX(1.0328);transform-origin:0 0;">05/08/21</div>
<div class="t" style="left:583.00px;top:162.29px;font:normal 11px 'Liberation Sans';color:#fff;transform:scaleX(1.0094);transform-origin:0 0;">15/08/21</div>
<div class="t" style="left:739.20px;top:162.29px;font:normal 11px 'Liberation Sans';color:#fff;transform:scaleX(0.9089);transform-origin:0 0;">1-CARTEI.</div>
<div class="t" style="left:806.50px;top:162.29px;font:normal 11px 'Liberation Sans';color:#fff;transform:scaleX(0.7500);transform-origin:0 0;">3</div>
<div class="t" style="left:817.00px;top:162.29px;font:normal 11px 'Liberation Sans';color:#fff;transform:scaleX(1.0000);transform-origin:0 0;">/</div>
<div class="t" style="left:839.90px;top:162.29px;font:normal 11px 'Liberation Sans';color:#fff;transform:scaleX(1.0106);transform-origin:0 0;">8.105</div>
<div class="t" style="left:38.00px;top:187.29px;font:normal 11px 'Liberation Sans';color:#000;transform:scaleX(0.9888);transform-origin:0 0;">2021-09</div>
<div class="t" style="left:115.30px;top:186.29px;font:normal 11px 'Liberation Sans';color:#000;">51.224-</div>
<div class="t" style="left:152.90px;top:186.29px;font:normal 11px 'Liberation Sans';color:#000;transform:scaleX(0.8803);transform-origin:0 0;">FORNECEDOR DE ENERGIA ELÉTRICA</div>
<div class="t" style="left:350.60px;top:186.29px;font:normal 11px 'Liberation Sans';color:#000;transform:scaleX(0.9981);transform-origin:0 0;">001</div>
<div class="t" style="left:384.60px;top:186.29px;font:normal 11px 'Liberation Sans';color:#000;transform:scaleX(0.8429);transform-origin:0 0;">P</div>
<div class="t" style="left:405.70px;top:186.29px;font:normal 11px 'Liberation Sans';color:#000;transform:scaleX(0.9266);transform-origin:0 0;">DM</div>
<div class="t" style="left:475.00px;top:186.29px;font:normal 11px 'Liberation Sans';color:#000;transform:scaleX(1.0023);transform-origin:0 0;">1.500,00</div>
<div class="t" style="left:522.50px;top:186.29px;font:normal 11px 'Liberation Sans';color:#000;transform:scaleX(1.0328);transform-origin:0 0;">05/01/21</div>
<div class="t" style="left:583.00px;top:186.29px;font:normal 11px 'Liberation Sans';color:#000;transform:scaleX(1.0094);transform-origin:0 0;">05/09/21</div>
<div class="t" style="left:739.20px;top:186.29px;font:normal 11px 'Liberation Sans';color:#000;transform:scaleX(0.9089);transform-origin:0 0;">1-CARTEI.</div>
<div class="t" style="left:38.00px;top:211.29px;font:normal 11px 'Liberation Sans';color:#000;transform:scaleX(0.9888);transform-origin:0 0;">2021-10</div>
<div class="t" style="left:115.30px;top:210.29px;font:normal 11px 'Liberation Sans';color:#000;">51.224-</div>
<div class="t" style="left:152.90px;top:210.29px;font:normal 11px 'Liberation Sans';color:#000;transform:scaleX(0.8803);transform-origin:0 0;">FORNECEDOR DE ENERGIA ELÉTRICA</div>
<div class="t" style="left:350.60px;top:210.29px;font:normal 11px 'Liberation Sans';color:#000;transform:scaleX(0.9981);transform-origin:0 0;">001</div>
<div class="t" style="left:384.60px;top:210.29px;font:normal 11px 'Liberation Sans';color:#000;transform:scaleX(0.8429);transform-origin:0 0;">P</div>
<div class="t" style="left:405.70px;top:210.29px;font:normal 11px 'Liberation Sans';color:#000;transform:scaleX(0.9266);transform-origin:0 0;">DM</div>
<div class="t" style="left:475.00px;top:210.29px;font:normal 11px 'Liberation Sans';color:#000;transform:scaleX(1.0023);transform-origin:0 0;">1.500,00</div>
<div class="t" style="left:522.50px;top:210.29px;font:normal 11px 'Liberation Sans';color:#000;transform:scaleX(1.0328);transform-origin:0 0;">05/01/21</div>
<div class="t" style="left:583.00px;top:210.29px;font:normal 11px 'Liberation Sans';color:#000;transform:scaleX(1.0094);transform-origin:0 0;">05/10/21</div>
<div class="t" style="left:739.20px;top:210.29px;font:normal 11px 'Liberation Sans';color:#000;transform:scaleX(0.9089);transform-origin:0 0;">1-CARTEI.</div>
<div class="t" style="left:38.00px;top:235.29px;font:normal 11px 'Liberation Sans';color:#000;transform:scaleX(1.0093);transform-origin:0 0;">2021-11</div>
<div class="t" style="left:115.30px;top:234.29px;font:normal 11px 'Liberation Sans';color:#000;">51.224-</div>
<div class="t" style="left:152.90px;top:234.29px;font:normal 11px 'Liberation Sans';color:#000;transform:scaleX(0.8803);transform-origin:0 0;">FORNECEDOR DE ENERGIA ELÉTRICA</div>
<div class="t" style="left:350.60px;top:234.29px;font:normal 11px 'Liberation Sans';color:#000;transform:scaleX(0.9981);transform-origin:0 0;">001</div>
<div class="t" style="left:384.60px;top:234.29px;font:normal 11px 'Liberation Sans';color:#000;transform:scaleX(0.8429);transform-origin:0 0;">P</div>
<div class="t" style="left:405.70px;top:234.29px;font:normal 11px 'Liberation Sans';color:#000;transform:scaleX(0.9266);transform-origin:0 0;">DM</div>
<div class="t" style="left:475.00px;top:234.29px;font:normal 11px 'Liberation Sans';color:#000;transform:scaleX(1.0023);transform-origin:0 0;">1.500,00</div>
<div class="t" style="left:522.50px;top:234.29px;font:normal 11px 'Liberation Sans';color:#000;transform:scaleX(1.0328);transform-origin:0 0;">05/01/21</div>
<div class="t" style="left:583.00px;top:234.29px;font:normal 11px 'Liberation Sans';color:#000;transform:scaleX(1.0290);transform-origin:0 0;">05/11/21</div>
<div class="t" style="left:739.20px;top:234.29px;font:normal 11px 'Liberation Sans';color:#000;transform:scaleX(0.9089);transform-origin:0 0;">1-CARTEI.</div>
<div class="t" style="left:38.00px;top:259.29px;font:normal 11px 'Liberation Sans';color:#000;transform:scaleX(0.9888);transform-origin:0 0;">2021-12</div>
<div class="t" style="left:115.30px;top:258.29px;font:normal 11px 'Liberation Sans';color:#000;">51.224-</div>
<div class="t" style="left:152.90px;top:258.29px;font:normal 11px 'Liberation Sans';color:#000;transform:scaleX(0.8803);transform-origin:0 0;">FORNECEDOR DE ENERGIA ELÉTRICA</div>
<div class="t" style="left:350.60px;top:258.29px;font:normal 11px 'Liberation Sans';color:#000;transform:scaleX(0.9981);transform-origin:0 0;">001</div>
<div class="t" style="left:384.60px;top:258.29px;font:normal 11px 'Liberation Sans';color:#000;transform:scaleX(0.8429);transform-origin:0 0;">P</div>
<div class="t" style="left:405.70px;top:258.29px;font:normal 11px 'Liberation Sans';color:#000;transform:scaleX(0.9266);transform-origin:0 0;">DM</div>
<div class="t" style="left:475.00px;top:258.29px;font:normal 11px 'Liberation Sans';color:#000;transform:scaleX(1.0023);transform-origin:0 0;">1.500,00</div>
<div class="t" style="left:522.50px;top:258.29px;font:normal 11px 'Liberation Sans';color:#000;transform:scaleX(1.0328);transform-origin:0 0;">05/01/21</div>
<div class="t" style="left:583.00px;top:258.29px;font:normal 11px 'Liberation Sans';color:#000;transform:scaleX(1.0094);transform-origin:0 0;">05/12/21</div>
<div class="t" style="left:739.20px;top:258.29px;font:normal 11px 'Liberation Sans';color:#000;transform:scaleX(0.9089);transform-origin:0 0;">1-CARTEI.</div>
<div class="t" style="left:16.90px;top:463.69px;font:bold 11px 'Liberation Sans';color:#000;transform:scaleX(1.0409);transform-origin:0 0;-webkit-text-stroke:0;">Observações</div>
<div class="t" style="left:20.40px;top:495.00px;font:normal 12px 'Liberation Mono';color:#000;-webkit-text-stroke:0;letter-spacing:-0.2px;">Loc.Cobrança: CARTEIRA</div>
<div class="t" style="left:21.40px;top:509.60px;font:normal 12px 'Liberation Mono';color:#000;-webkit-text-stroke:0;letter-spacing:-0.2px;">Origem doc.: Notas do financeiro Sigla: 001 Indefinido</div>
<div class="t" style="left:18.90px;top:560.09px;font:bold 11px 'Liberation Sans';color:#14147a;transform:scaleX(1.1206);transform-origin:0 0;-webkit-text-stroke:0;">Registro alterado em 28/07/2021 às 16:05:03</div>
</body></html>
